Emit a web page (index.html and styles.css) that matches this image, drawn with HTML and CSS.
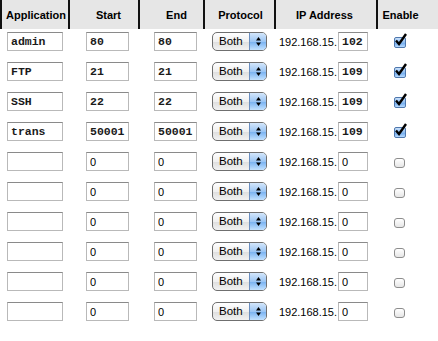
FILE: index.html
```html
<!DOCTYPE html>
<html lang="en">
<head>
    <meta charset="UTF-8">
    <title>Port Mapping</title>
    <link rel="stylesheet" href="styles.css">
</head>
<body>
    <div class="ports">
        <div class="row head">
            <div class="cell c1">Application</div>
            <div class="cell c2">Start</div>
            <div class="cell c3">End</div>
            <div class="cell c4">Protocol</div>
            <div class="cell c5">IP Address</div>
            <div class="cell c6">Enable</div>
        </div>

        <div class="row">
            <div class="cell c1"><input class="field app mono" value="admin"></div>
            <div class="cell c2"><input class="field port mono" value="80"></div>
            <div class="cell c3"><input class="field port mono" value="80"></div>
            <div class="cell c4"><span class="popup"><span class="label">Both</span><span class="arrows"><svg width="7" height="11" viewBox="0 0 7 11"><polygon points="3.5,1 6,4.5 1,4.5"/><polygon points="3.5,10 6,6.5 1,6.5"/></svg></span></span></div>
            <div class="cell c5"><span class="prefix">192.168.15.</span><input class="field host mono" value="102"></div>
            <div class="cell c6"><span class="check on"><svg width="15" height="14" viewBox="0 0 15 14"><path d="M3 7.5 L6 11 L13 1" fill="none" stroke="#000" stroke-width="2.4"/></svg></span></div>
        </div>

        <div class="row">
            <div class="cell c1"><input class="field app mono" value="FTP"></div>
            <div class="cell c2"><input class="field port mono" value="21"></div>
            <div class="cell c3"><input class="field port mono" value="21"></div>
            <div class="cell c4"><span class="popup"><span class="label">Both</span><span class="arrows"><svg width="7" height="11" viewBox="0 0 7 11"><polygon points="3.5,1 6,4.5 1,4.5"/><polygon points="3.5,10 6,6.5 1,6.5"/></svg></span></span></div>
            <div class="cell c5"><span class="prefix">192.168.15.</span><input class="field host mono" value="109"></div>
            <div class="cell c6"><span class="check on"><svg width="15" height="14" viewBox="0 0 15 14"><path d="M3 7.5 L6 11 L13 1" fill="none" stroke="#000" stroke-width="2.4"/></svg></span></div>
        </div>

        <div class="row">
            <div class="cell c1"><input class="field app mono" value="SSH"></div>
            <div class="cell c2"><input class="field port mono" value="22"></div>
            <div class="cell c3"><input class="field port mono" value="22"></div>
            <div class="cell c4"><span class="popup"><span class="label">Both</span><span class="arrows"><svg width="7" height="11" viewBox="0 0 7 11"><polygon points="3.5,1 6,4.5 1,4.5"/><polygon points="3.5,10 6,6.5 1,6.5"/></svg></span></span></div>
            <div class="cell c5"><span class="prefix">192.168.15.</span><input class="field host mono" value="109"></div>
            <div class="cell c6"><span class="check on"><svg width="15" height="14" viewBox="0 0 15 14"><path d="M3 7.5 L6 11 L13 1" fill="none" stroke="#000" stroke-width="2.4"/></svg></span></div>
        </div>

        <div class="row">
            <div class="cell c1"><input class="field app mono" value="trans"></div>
            <div class="cell c2"><input class="field port mono" value="50001"></div>
            <div class="cell c3"><input class="field port mono" value="50001"></div>
            <div class="cell c4"><span class="popup"><span class="label">Both</span><span class="arrows"><svg width="7" height="11" viewBox="0 0 7 11"><polygon points="3.5,1 6,4.5 1,4.5"/><polygon points="3.5,10 6,6.5 1,6.5"/></svg></span></span></div>
            <div class="cell c5"><span class="prefix">192.168.15.</span><input class="field host mono" value="109"></div>
            <div class="cell c6"><span class="check on"><svg width="15" height="14" viewBox="0 0 15 14"><path d="M3 7.5 L6 11 L13 1" fill="none" stroke="#000" stroke-width="2.4"/></svg></span></div>
        </div>

        <div class="row">
            <div class="cell c1"><input class="field app" value=""></div>
            <div class="cell c2"><input class="field port" value="0"></div>
            <div class="cell c3"><input class="field port" value="0"></div>
            <div class="cell c4"><span class="popup"><span class="label">Both</span><span class="arrows"><svg width="7" height="11" viewBox="0 0 7 11"><polygon points="3.5,1 6,4.5 1,4.5"/><polygon points="3.5,10 6,6.5 1,6.5"/></svg></span></span></div>
            <div class="cell c5"><span class="prefix">192.168.15.</span><input class="field host" value="0"></div>
            <div class="cell c6"><span class="check"></span></div>
        </div>

        <div class="row">
            <div class="cell c1"><input class="field app" value=""></div>
            <div class="cell c2"><input class="field port" value="0"></div>
            <div class="cell c3"><input class="field port" value="0"></div>
            <div class="cell c4"><span class="popup"><span class="label">Both</span><span class="arrows"><svg width="7" height="11" viewBox="0 0 7 11"><polygon points="3.5,1 6,4.5 1,4.5"/><polygon points="3.5,10 6,6.5 1,6.5"/></svg></span></span></div>
            <div class="cell c5"><span class="prefix">192.168.15.</span><input class="field host" value="0"></div>
            <div class="cell c6"><span class="check"></span></div>
        </div>

        <div class="row">
            <div class="cell c1"><input class="field app" value=""></div>
            <div class="cell c2"><input class="field port" value="0"></div>
            <div class="cell c3"><input class="field port" value="0"></div>
            <div class="cell c4"><span class="popup"><span class="label">Both</span><span class="arrows"><svg width="7" height="11" viewBox="0 0 7 11"><polygon points="3.5,1 6,4.5 1,4.5"/><polygon points="3.5,10 6,6.5 1,6.5"/></svg></span></span></div>
            <div class="cell c5"><span class="prefix">192.168.15.</span><input class="field host" value="0"></div>
            <div class="cell c6"><span class="check"></span></div>
        </div>

        <div class="row">
            <div class="cell c1"><input class="field app" value=""></div>
            <div class="cell c2"><input class="field port" value="0"></div>
            <div class="cell c3"><input class="field port" value="0"></div>
            <div class="cell c4"><span class="popup"><span class="label">Both</span><span class="arrows"><svg width="7" height="11" viewBox="0 0 7 11"><polygon points="3.5,1 6,4.5 1,4.5"/><polygon points="3.5,10 6,6.5 1,6.5"/></svg></span></span></div>
            <div class="cell c5"><span class="prefix">192.168.15.</span><input class="field host" value="0"></div>
            <div class="cell c6"><span class="check"></span></div>
        </div>

        <div class="row">
            <div class="cell c1"><input class="field app" value=""></div>
            <div class="cell c2"><input class="field port" value="0"></div>
            <div class="cell c3"><input class="field port" value="0"></div>
            <div class="cell c4"><span class="popup"><span class="label">Both</span><span class="arrows"><svg width="7" height="11" viewBox="0 0 7 11"><polygon points="3.5,1 6,4.5 1,4.5"/><polygon points="3.5,10 6,6.5 1,6.5"/></svg></span></span></div>
            <div class="cell c5"><span class="prefix">192.168.15.</span><input class="field host" value="0"></div>
            <div class="cell c6"><span class="check"></span></div>
        </div>

        <div class="row">
            <div class="cell c1"><input class="field app" value=""></div>
            <div class="cell c2"><input class="field port" value="0"></div>
            <div class="cell c3"><input class="field port" value="0"></div>
            <div class="cell c4"><span class="popup"><span class="label">Both</span><span class="arrows"><svg width="7" height="11" viewBox="0 0 7 11"><polygon points="3.5,1 6,4.5 1,4.5"/><polygon points="3.5,10 6,6.5 1,6.5"/></svg></span></span></div>
            <div class="cell c5"><span class="prefix">192.168.15.</span><input class="field host" value="0"></div>
            <div class="cell c6"><span class="check"></span></div>
        </div>
    </div>
</body>
</html>
```

FILE: styles.css
```css
body {
    margin: 0;
    background: #fff;
    font-family: "Liberation Sans", Arial, sans-serif;
    font-size: 11px;
    color: #000;
}

.ports {
    width: 438px;
}

.row {
    display: grid;
    grid-template-columns: 68px 70px 65px 71px 102px 62px;
    height: 30px;
    box-sizing: border-box;
    padding-top: 3px;
}

.cell {
    display: flex;
    align-items: center;
    justify-content: center;
    height: 19px;
}

/* column offsets so header + data line up like the original */
.c1 { padding-left: 2px; }
.c2 { padding-left: 9px; }
.c3 { padding-left: 10px; }
.c4 { padding-left: 2px; }
.c5 { padding-right: 3px; }
.c6 { padding-right: 15px; }

.head {
    height: 29px;
    padding-top: 0;
    background-color: #e6e6e6;
}

.head .cell {
    height: 29px;
    border-left: 2px solid #111;
    font-weight: bold;
}

.field {
    box-sizing: border-box;
    height: 19px;
    margin: 0;
    padding: 0 3px;
    border: 1px solid #b9b9b9;
    border-top-color: #8a8a8a;
    background: #fff;
    font-family: "Liberation Sans", Arial, sans-serif;
    font-size: 11px;
    color: #000;
    outline: none;
}

.mono {
    font-family: "Liberation Mono", "Courier New", monospace;
    font-size: 11.5px;
    font-weight: bold;
    color: #1a1a1a;
}

.app { width: 56px; }
.port { width: 43px; }
.host { width: 30px; }

.prefix {
    margin-right: 1px;
}

.popup {
    display: flex;
    width: 55px;
    height: 19px;
    box-sizing: border-box;
    border: 1px solid #6f6f6f;
    border-radius: 5px;
    overflow: hidden;
    background: linear-gradient(#ffffff, #f0f0f0 50%, #dedede 51%, #f2f2f2);
}

.popup .label {
    flex: 1;
    padding-left: 6px;
    line-height: 17px;
    font-size: 11.5px;
}

.popup .arrows {
    width: 16px;
    display: flex;
    align-items: center;
    justify-content: center;
    border-left: 1px solid #6b8fc0;
    background: linear-gradient(#d3e6fb, #9cc6f4 50%, #76b0f0 51%, #c3e2ff);
}

.check {
    display: block;
    position: relative;
    width: 11px;
    height: 10px;
    box-sizing: border-box;
    border: 1px solid #8d8d8d;
    border-radius: 3px;
    background: linear-gradient(#ffffff, #e6e6e6);
    margin-top: 2px;
}

.check.on {
    width: 12px;
    height: 11px;
    border-color: #4f77ad;
    border-radius: 2px;
    background: linear-gradient(#c9e0fa, #8cbcf0 50%, #6aa6ec 51%, #b8dbff);
}

.check svg {
    position: absolute;
    left: -2px;
    top: -5px;
}
```
